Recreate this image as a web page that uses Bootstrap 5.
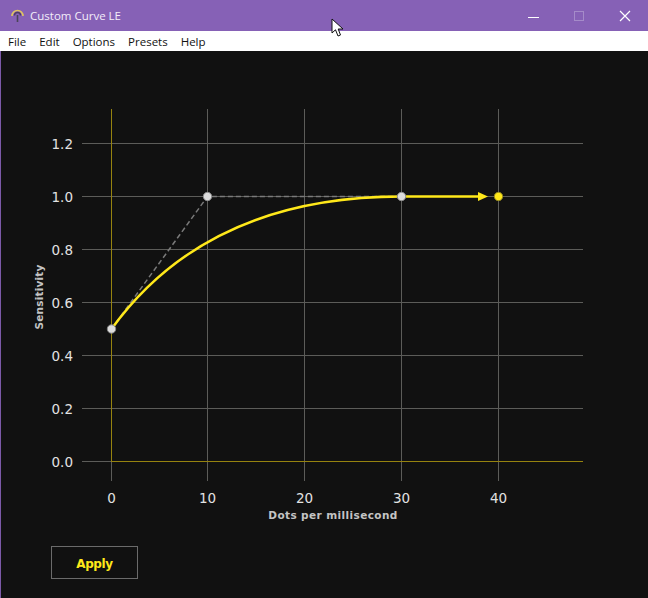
<!DOCTYPE html>
<html lang="en">
<head>
    <meta charset="UTF-8">
    <title>Custom Curve LE</title>
    <link href="https://cdn.jsdelivr.net/npm/bootstrap@5.3.0/dist/css/bootstrap.min.css" rel="stylesheet">
    <style>
        html, body { height: 100%; }
        body { background: #111111; overflow: hidden; }
        .app-window { height: 598px; border-left: 1px solid #7c5aa8; position: relative; }
        .title-bar { height: 31px; margin-left: -1px; background: #8661b6; color: #f3edf9; font: 11.5px "Open Sans", sans-serif; padding-left: 10px; }
        .title-text { margin-left: 5px; }
        .win-btns { margin-left: auto; }
        .win-btn { width: 46px; height: 30px; }
        .menu-bar { height: 20px; margin-left: -1px; background: #fff; color: #111; font: 11.5px "Open Sans", sans-serif; padding-left: 8px; gap: 13px; }
        .chart-svg { display: block; margin-left: -1px; }
        .chart-svg text { font-family: "DejaVu Sans", sans-serif; }
        .tick-lbl { font-size: 13.5px; fill: #e2e2e2; }
        .axis-lbl { font-size: 10.5px; font-weight: 700; fill: #c4c4c4; }
        .apply-btn { width: 87px; height: 33px; margin: 12px 0 0 50px; padding: 2px 0 0; border: 1px solid #6b6b6b; border-radius: 0; background: transparent; color: #ffe81a; font: 700 12px "DejaVu Sans", sans-serif; letter-spacing: -0.4px; }
        .apply-btn:hover { background: #1c1c1c; color: #ffe81a; border-color: #6b6b6b; }
        .cursor-pic { position: absolute; left: 330px; top: 18px; }
    </style>
</head>
<body>
<div class="app-window d-flex flex-column">
    <!-- title bar -->
    <div class="title-bar d-flex align-items-center">
        <svg width="15" height="15" viewBox="0 0 15 15">
            <path d="M2 8 A5.5 5.5 0 0 1 13 8" fill="none" stroke="#e0c560" stroke-width="1.6"/>
            <path d="M4.5 7.5 A3 3 0 0 1 10.500 7.500" fill="none" stroke="#4d3a66" stroke-width="1.400"/>
            <path d="M7.500 7 V14" stroke="#4a4458" stroke-width="1.600"/>
        </svg>
        <span class="title-text">Custom Curve LE</span>
        <div class="win-btns d-flex">
            <div class="win-btn d-flex align-items-center justify-content-center">
                <svg width="12" height="12"><path d="M1 7.500 H12" stroke="#fff" stroke-width="1"/></svg>
            </div>
            <div class="win-btn d-flex align-items-center justify-content-center">
                <svg width="12" height="12"><rect x="1.500" y="1.500" width="9" height="9" fill="none" stroke="#a58bc9" stroke-width="1"/></svg>
            </div>
            <div class="win-btn d-flex align-items-center justify-content-center">
                <svg width="12" height="12"><path d="M1 1 L11 11 M11 1 L1 11" stroke="#fff" stroke-width="1.200"/></svg>
            </div>
        </div>
    </div>

    <!-- menu -->
    <div class="menu-bar d-flex align-items-center">
        <span>File</span><span>Edit</span><span>Options</span><span>Presets</span><span>Help</span>
    </div>

    <!-- chart, origin of the viewBox is the top of the client area -->
    <svg class="chart-svg" width="648" height="483" viewBox="0 51 648 483" id="chart"></svg>

    <div>
        <button type="button" class="btn apply-btn">Apply</button>
    </div>

    <svg class="cursor-pic" width="14" height="21" viewBox="0 0 14 21">
        <path d="M1 1 V15 L4.500 11.800 L7 18 L9.500 17 L7.200 11 H12 Z" fill="#fff" stroke="#111" stroke-width="1"/>
    </svg>
</div>

<script>
// axis positions read off the picture, snapped to the middle of a pixel
const xPos = v => Math.floor(111 + v * 9.68) + 0.5;
const yPos = v => Math.floor(461.5 - v * 265) + 0.5;
const svg = document.getElementById('chart');
let out = '';

[10, 20, 30, 40].forEach(v => {
    out += `<line x1="${xPos(v)}" x2="${xPos(v)}" y1="109" y2="481" stroke="#5c5c59" stroke-width="1"/>`;
});
[0.2, 0.4, 0.6, 0.8, 1.0, 1.2].forEach(v => {
    out += `<line x1="82" x2="583" y1="${yPos(v)}" y2="${yPos(v)}" stroke="#5c5c59" stroke-width="1"/>`;
});
out += `<line x1="82" x2="111" y1="461.500" y2="461.500" stroke="#5c5c59"/>`;
out += `<line x1="111.500" x2="111.500" y1="462" y2="481" stroke="#5c5c59"/>`;
out += `<line x1="111" x2="583" y1="461.500" y2="461.500" stroke="#96830f"/>`;
out += `<line x1="111.500" x2="111.500" y1="109" y2="461.500" stroke="#96830f"/>`;

[0, 0.2, 0.4, 0.6, 0.8, 1.0, 1.2].forEach(v => {
    out += `<text class="tick-lbl" x="73" y="${yPos(v) + 5}" text-anchor="end">${v.toFixed(1)}</text>`;
});
[0, 10, 20, 30, 40].forEach(v => {
    out += `<text class="tick-lbl" x="${xPos(v)}" y="503" text-anchor="middle">${v}</text>`;
});
out += `<text class="axis-lbl" x="333" y="519" text-anchor="middle" letter-spacing="0.4">Dots per millisecond</text>`;
out += `<text class="axis-lbl" transform="translate(43 297) rotate(-90)" text-anchor="middle" letter-spacing="0.2">Sensitivity</text>`;

// control polygon
out += `<path d="M111.500 329 L207.500 196.500 H401.500" fill="none" stroke="#7a7a7a" stroke-width="1.500" stroke-dasharray="5 3"/>`;
// curve and the flat part with its arrow
out += `<path d="M111.500 329 Q207.500 196.500 401.500 196.500" fill="none" stroke="#ffe81a" stroke-width="2.500"/>`;
out += `<path d="M401.500 196.500 H480" fill="none" stroke="#ffe81a" stroke-width="2.500"/>`;
out += `<path d="M478 192 L488 196.500 L478 201 Z" fill="#ffe81a"/>`;

[[111.5, 329], [207.5, 196.5], [401.5, 196.5]].forEach(p => {
    out += `<circle cx="${p[0]}" cy="${p[1]}" r="4.200" fill="#dcdcdc" stroke="#8a8a8a" stroke-width="1"/>`;
});
out += `<circle cx="498.500" cy="196.500" r="4.200" fill="#ffe81a" stroke="#8f8420" stroke-width="1"/>`;
svg.innerHTML = out;
</script>
<script src="https://cdn.jsdelivr.net/npm/bootstrap@5.3.0/dist/js/bootstrap.bundle.min.js"></script>
</body>
</html>
